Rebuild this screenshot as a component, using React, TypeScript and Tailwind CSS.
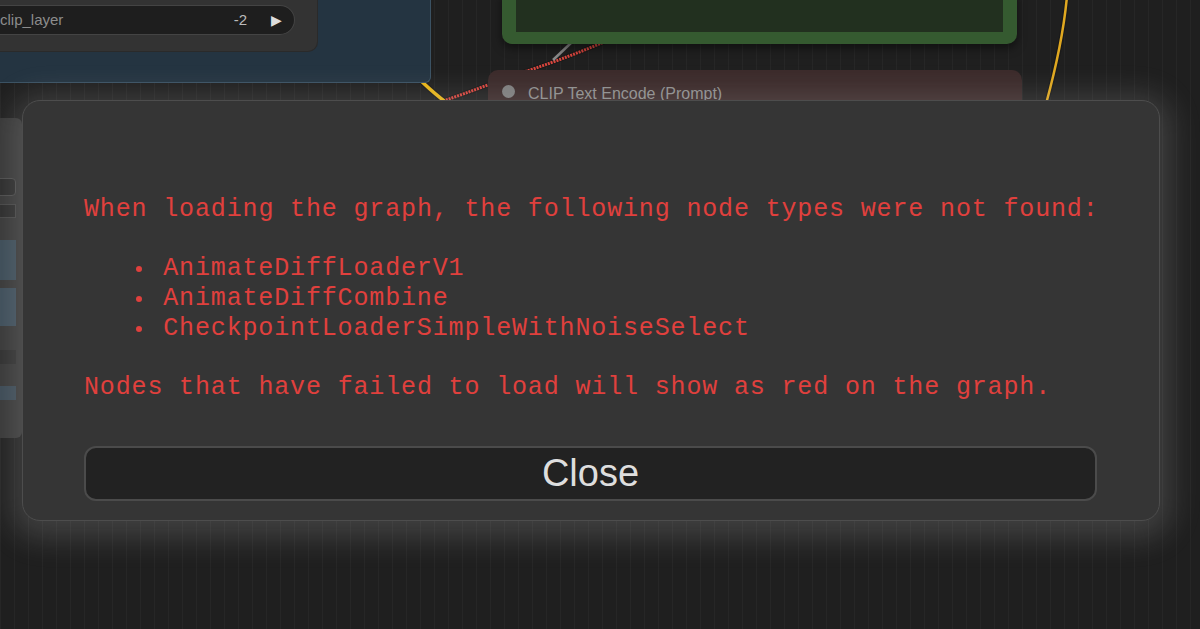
import React from "react";

const missingNodes = [
  "AnimateDiffLoaderV1",
  "AnimateDiffCombine",
  "CheckpointLoaderSimpleWithNoiseSelect",
];

function Wires() {
  return (
    <svg className="absolute inset-0" width="1200" height="629" viewBox="0 0 1200 629">
      {/* yellow clip wire, left */}
      <path d="M330 -4 C 360 20, 385 40, 402 60 S 430 90, 448 104" fill="none" stroke="#1a1a1a" strokeWidth="6" />
      <path d="M330 -4 C 360 20, 385 40, 402 60 S 430 90, 448 104" fill="none" stroke="#e8b518" strokeWidth="3.5" />
      <circle cx="402" cy="60" r="6" fill="#f0b919" stroke="#8a6a10" strokeWidth="1" />
      {/* red conditioning wire */}
      <path d="M446 100 C 470 92, 500 80, 530 70 S 580 52, 604 42" fill="none" stroke="#1a1a1a" strokeWidth="5" />
      <path d="M446 100 C 470 92, 500 80, 530 70 S 580 52, 604 42" fill="none" stroke="#d9453d" strokeWidth="3" strokeDasharray="2 1" />
      {/* grey wire */}
      <path d="M553 60 L 572 42" fill="none" stroke="#8a8a8a" strokeWidth="2.5" />
      {/* yellow wire, right */}
      <path d="M1067 -4 C 1064 30, 1058 60, 1046 104" fill="none" stroke="#1a1a1a" strokeWidth="5" />
      <path d="M1067 -4 C 1064 30, 1058 60, 1046 104" fill="none" stroke="#e0a820" strokeWidth="2.5" />
    </svg>
  );
}

function CanvasNodes() {
  return (
    <>
      {/* Load checkpoint style node, top left */}
      <div className="absolute left-0 top-0 w-[431px] h-[83px] bg-[#243441] border-r border-b border-[#3b5263] rounded-br-md">
        <div className="w-[318px] h-[52px] bg-[#333] rounded-br-[10px] border-r border-b border-[#2a2a2a] pt-[5px] pr-[22px]">
          <div className="h-[30px] rounded-r-full bg-[#1e1e1e] border-y border-r border-[#444] flex items-center pl-0 pr-[12px] font-['Liberation_Sans',sans-serif] text-[15px] text-[#8c8c8c]">
            <span className="flex-1">clip_layer</span>
            <span className="mr-[24px] text-[#bbb]">-2</span>
            <span className="text-[#ddd] text-[14px]">▶</span>
          </div>
        </div>
      </div>

      {/* green node, top middle */}
      <div className="absolute left-[502px] top-[-12px] w-[515px] h-[56px] rounded-[10px] bg-[#355a30] shadow-[0_4px_10px_rgba(0,0,0,0.5)] px-[14px] pb-[12px]">
        <div className="h-full bg-[#22301f]" />
      </div>

      {/* CLIP Text Encode header */}
      <div className="absolute left-[488px] top-[70px] w-[534px] h-[60px] rounded-t-[10px] bg-[#3b2a2a] flex items-start pt-[12px] pl-[14px] gap-[13px] font-['Liberation_Sans',sans-serif] text-[16px] text-[#8f8f8f]">
        <span className="w-[13px] h-[13px] mt-[3px] rounded-full bg-[#7d7d7d]" />
        <span>CLIP Text Encode (Prompt)</span>
      </div>

      {/* node peeking at the left edge */}
      <div className="absolute left-[-200px] top-[118px] w-[222px] h-[320px] bg-[#363636] rounded-r-md flex flex-col gap-[8px] pt-[60px] pr-[6px]">
        <div className="h-[18px] bg-[#2a2a2a] border border-[#4a4a4a] rounded-r-sm" />
        <div className="h-[14px] bg-[#2a2a2a] border border-[#444]" />
        <div className="h-[40px] mt-[14px] bg-[#3a4a55]" />
        <div className="h-[38px] bg-[#3c4c58]" />
        <div className="h-[14px] mt-[16px] bg-[#2e2e2e]" />
        <div className="h-[14px] mt-[14px] bg-[#3a4853]" />
      </div>
    </>
  );
}

export default function App() {
  return (
    <div className="relative w-[1200px] h-[629px] overflow-hidden bg-[#1f1f1f] bg-[linear-gradient(to_right,rgba(255,255,255,0.03)_1px,transparent_1px)] bg-[size:14px_100%]">
      <Wires />
      <CanvasNodes />

      {/* missing nodes dialog */}
      <div className="absolute left-[22px] top-[100px] w-[1138px] h-[421px] rounded-[18px] bg-[#353535] border border-[#4d4d4d] shadow-[0_6px_30px_12px_rgba(210,210,210,0.18)] pt-[94px] pl-[61px] pr-[62px] flex flex-col">
        <div className="font-['Liberation_Mono',monospace] text-[25px] leading-[29.7px] tracking-[0.85px] text-[#e0403d] whitespace-pre">
          <p>When loading the graph, the following node types were not found:</p>
          <ul className="my-[29.7px]">
            {missingNodes.map((name) => (
              <li key={name} className="h-[29.7px] flex items-center">
                <span className="w-[47.55px]" />
                <span className="w-[15.85px] flex justify-center">
                  <span className="w-[6px] h-[6px] rounded-full bg-[#e0403d]" />
                </span>
                <span className="w-[15.85px]" />
                <span>{name}</span>
              </li>
            ))}
          </ul>
          <p>Nodes that have failed to load will show as red on the graph.</p>
        </div>
        <button className="mt-[43px] h-[55px] w-full rounded-[12px] bg-[#222] border-2 border-[#4b4b4b] font-['Liberation_Sans',sans-serif] text-[38px] text-[#dedede] flex items-center justify-center">
          Close
        </button>
      </div>
    </div>
  );
}
